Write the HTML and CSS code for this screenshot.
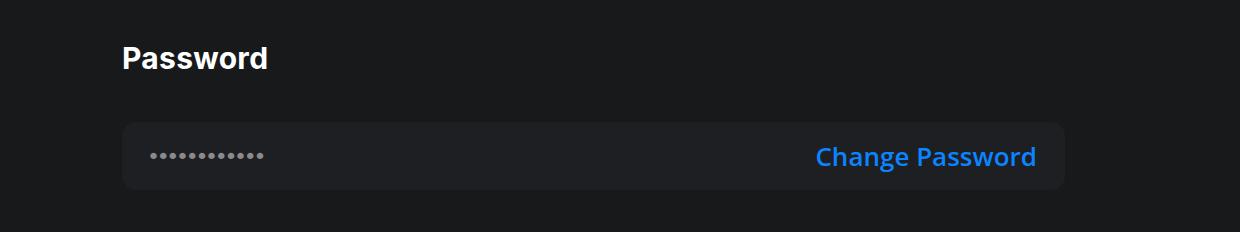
FILE: index.html
```html
<!DOCTYPE html>
<html lang="en">
<head>
    <meta charset="UTF-8">
    <meta name="viewport" content="width=device-width, initial-scale=1.0">
    <title>Password</title>
    <link rel="stylesheet" href="styles.css">
</head>
<body>
    <div class="section">
        <h2 class="section-title">Password</h2>
        <div class="password-row">
            <span class="password-mask">••••••••••••</span>
            <a class="change-link" href="#">Change Password</a>
        </div>
    </div>
</body>
</html>
```

FILE: styles.css
```css
html, body {
    margin: 0;
    padding: 0;
    background-color: #18191b;
}
.section {
    padding: 38px 0 0 122px;
    width: 943px;
}
.section-title {
    margin: 0 0 44px 0;
    font-family: Inter, sans-serif;
    font-weight: 700;
    font-size: 30px;
    line-height: 40px;
    letter-spacing: 0.3px;
    color: #ffffff;
}
.password-row {
    display: flex;
    align-items: center;
    justify-content: space-between;
    height: 68px;
    padding: 0 28px 0 25px;
    background-color: #1e1f22;
    border-radius: 14px;
}
.password-mask {
    font-family: "DejaVu Sans", sans-serif;
    font-size: 22px;
    letter-spacing: -3.3px;
    color: #8a8a8c;
}
.change-link {
    font-family: "Open Sans", sans-serif;
    font-weight: 600;
    font-size: 26px;
    color: #0a84ff;
    text-decoration: none;
}
```
